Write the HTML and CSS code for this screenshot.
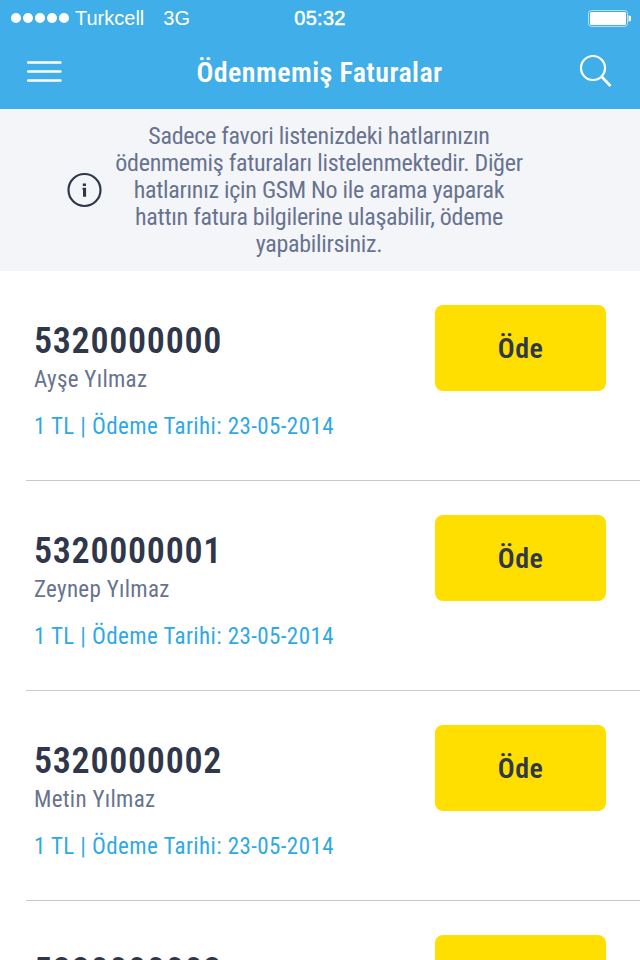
FILE: index.html
```html
<!DOCTYPE html>
<html lang="tr">
<head>
<meta charset="UTF-8" />
<meta name="viewport" content="width=device-width, initial-scale=1" />
<title>Ödenmemiş Faturalar</title>
<link rel="stylesheet" href="styles.css">
</head>
<body>

<header class="header">
  <div class="status-bar">
    <div class="status-left">
      <div class="signal"><i></i><i></i><i></i><i></i><i></i></div>
      <span class="carrier">Turkcell</span>
      <span class="network">3G</span>
    </div>
    <span class="time">05:32</span>
    <svg class="battery" width="43" height="17" viewBox="0 0 43 17">
      <rect x="0.5" y="0.5" width="39" height="16" rx="3" fill="none" stroke="#fff" stroke-opacity="0.6" />
      <rect x="2" y="2" width="36" height="13" rx="1.5" fill="#fff" />
      <path d="M40.5 5.5a3 3 0 0 1 0 6z" fill="#fff" />
    </svg>
  </div>

  <div class="nav-bar">
    <svg class="menu-icon" width="36" height="24" viewBox="0 0 36 24">
      <path d="M2.2 2.5h32.3M2.2 11.5h32.3M2.2 20.5h32.3" stroke="#fff" stroke-width="2.4" stroke-linecap="round" />
    </svg>
    <h1>Ödenmemiş Faturalar</h1>
    <svg class="search-icon" width="34" height="34" viewBox="0 0 34 34" fill="none" stroke="#fff" stroke-width="2.2">
      <circle cx="14" cy="13" r="12" />
      <path d="M22.5 21.5L31.5 31" stroke-width="2.7" />
    </svg>
  </div>
</header>

<section class="info">
  <svg class="info-icon" width="36" height="36" viewBox="0 0 36 36">
    <circle cx="18.5" cy="18" r="16" fill="none" stroke="#30374b" stroke-width="2.2" />
    <path d="M16.5 15.8h3.6v9H17v-7h-.5zM16.8 11.4H20v2.5h-3.2z" fill="#30374b" />
  </svg>
  <p>
    Sadece favori listenizdeki hatlarınızın<br>
    ödenmemiş faturaları listelenmektedir. Diğer<br>
    hatlarınız için GSM No ile arama yaparak<br>
    hattın fatura bilgilerine ulaşabilir, ödeme<br>
    yapabilirsiniz.
  </p>
</section>

<main class="bills">
  <article class="bill">
    <div>
      <h2>5320000000</h2>
      <p class="name">Ayşe Yılmaz</p>
      <p class="due">1 TL | Ödeme Tarihi: 23-05-2014</p>
    </div>
    <button>Öde</button>
  </article>
  <article class="bill">
    <div>
      <h2>5320000001</h2>
      <p class="name">Zeynep Yılmaz</p>
      <p class="due">1 TL | Ödeme Tarihi: 23-05-2014</p>
    </div>
    <button>Öde</button>
  </article>
  <article class="bill">
    <div>
      <h2>5320000002</h2>
      <p class="name">Metin Yılmaz</p>
      <p class="due">1 TL | Ödeme Tarihi: 23-05-2014</p>
    </div>
    <button>Öde</button>
  </article>
  <article class="bill">
    <div>
      <h2>5320000003</h2>
    </div>
    <button>Öde</button>
  </article>
</main>

</body>
</html>
```

FILE: styles.css
```css
* {
  box-sizing: border-box;
}

body {
  margin: 0;
  height: 960px;
  display: flex;
  flex-direction: column;
  overflow: hidden;
  background: #fff;
  color: #30374b;
  font-family: Roboto, "Noto Sans", sans-serif;
  font-stretch: 75%;
}

h1, h2, p {
  margin: 0;
}

.header {
  flex: none;
  height: 109px;
  background: #40aee8;
  color: #fff;
}

.status-bar {
  display: grid;
  grid-template-columns: 1fr auto 1fr;
  align-items: center;
  height: 36px;
  padding: 0 9px 0 11px;
  font-family: "Liberation Sans", Arial, sans-serif;
  font-size: 20px;
}

.status-left {
  display: flex;
  align-items: center;
}

.signal {
  display: flex;
  gap: 2px;
}

.signal i {
  width: 10px;
  height: 10px;
  border-radius: 50%;
  background: #fff;
}

.carrier {
  margin-left: 6px;
}

.network {
  margin-left: 19px;
}

.time {
  margin-right: 2px;
  letter-spacing: 0.3px;
  -webkit-text-stroke: 0.5px #fff;
}

.battery {
  justify-self: end;
}

.nav-bar {
  display: grid;
  grid-template-columns: 1fr auto 1fr;
  align-items: center;
  height: 73px;
  padding: 0 27px 1px 26px;
}

.nav-bar h1 {
  font-size: 28px;
  font-weight: 600;
  letter-spacing: 0.4px;
}

.search-icon {
  justify-self: end;
}

.info {
  flex: none;
  display: grid;
  grid-template-columns: 36px 434px;
  align-items: center;
  height: 162px;
  padding-left: 66px;
  background: #f4f5f9;
  color: #68738e;
}

.info p {
  font-size: 24px;
  letter-spacing: -0.28px;
  line-height: 27px;
  text-align: center;
  white-space: nowrap;
}

.bills {
  flex: 1;
  min-height: 0;
  overflow: hidden;
  padding-left: 26px;
}

.bill {
  display: flex;
  justify-content: space-between;
  height: 210px;
  padding: 34px 34px 0 8px;
  border-bottom: 1px solid #c9c9cd;
}

.bill h2 {
  margin-top: 16px;
  font-size: 36px;
  font-weight: 600;
  letter-spacing: 0.7px;
  line-height: 40px;
}

.name {
  margin-top: 5px;
  font-size: 23px;
  letter-spacing: 0.3px;
  line-height: 28px;
  color: #68738e;
}

.due {
  margin-top: 19px;
  font-size: 23px;
  letter-spacing: 0.4px;
  line-height: 28px;
  color: #2fa9e6;
}

.bill button {
  flex: none;
  width: 171px;
  height: 86px;
  border: none;
  border-radius: 8px;
  background: #ffdf00;
  color: #30374b;
  font: inherit;
  font-size: 28px;
  font-stretch: 75%;
  font-weight: 600;
  letter-spacing: 0.4px;
}
```
